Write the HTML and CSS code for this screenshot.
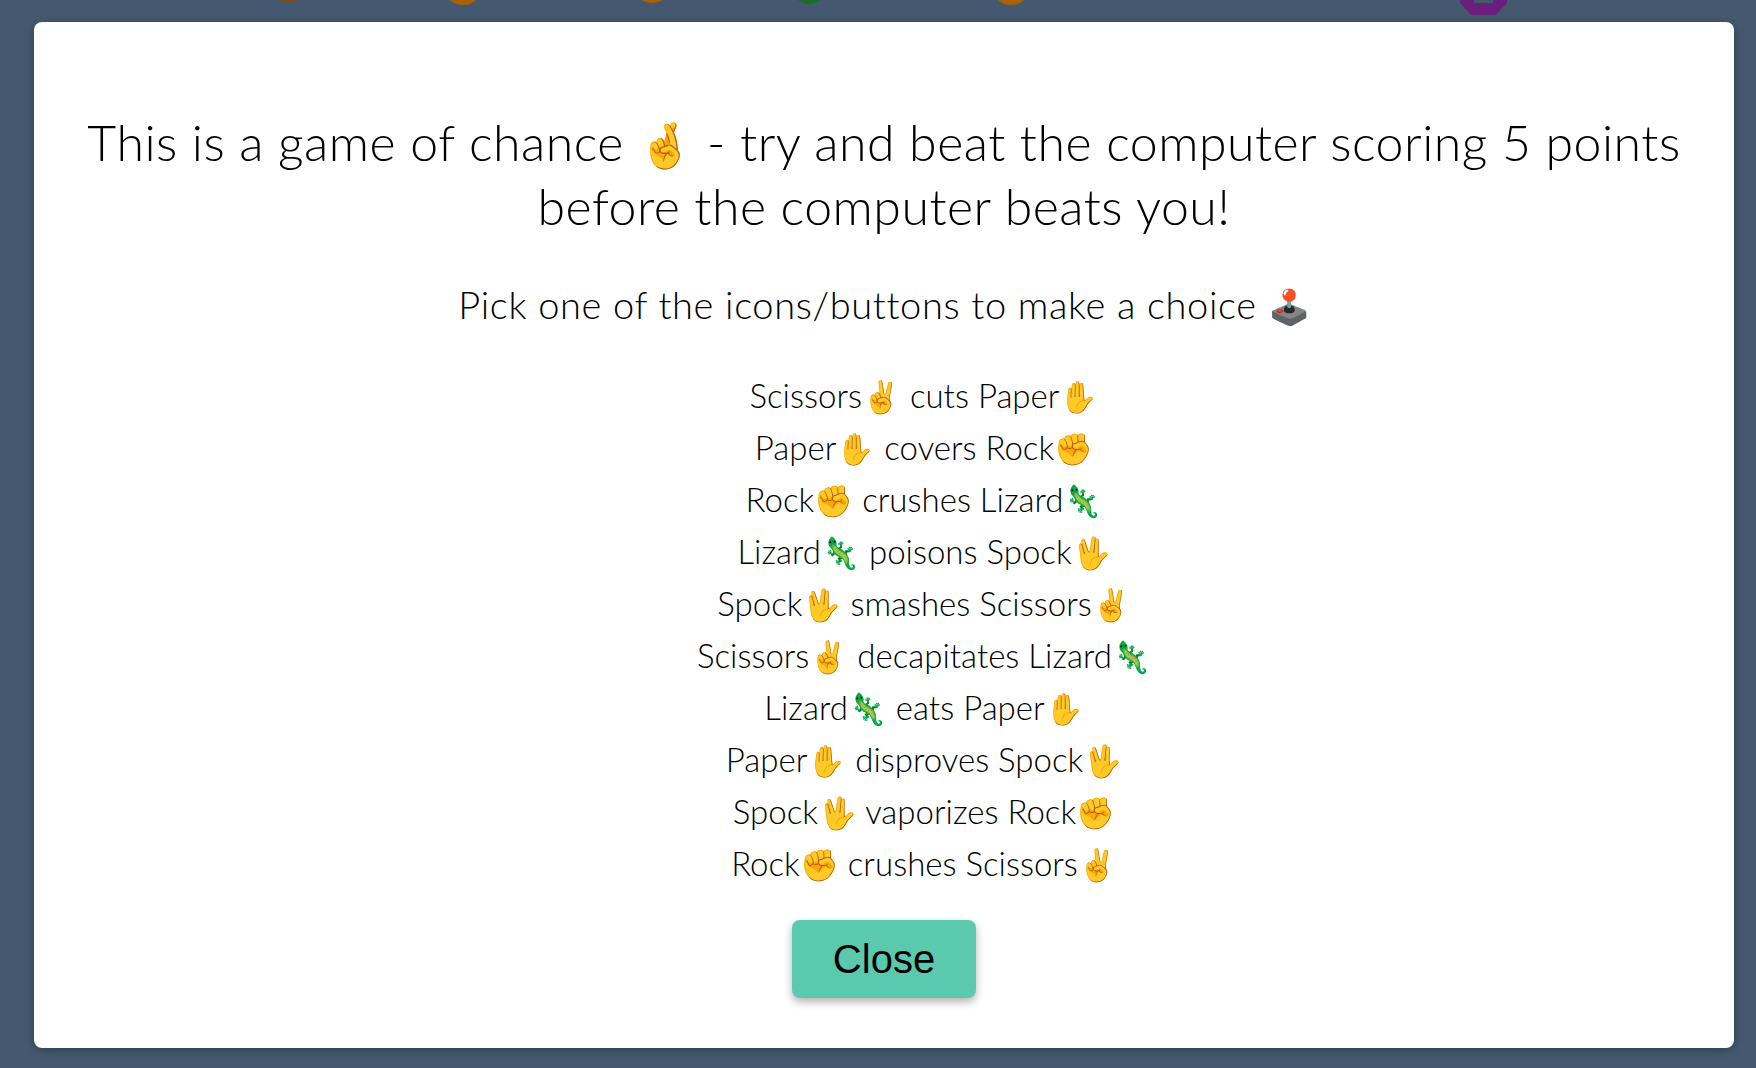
FILE: index.html
```html
<!DOCTYPE html>
<html lang="en">
<head>
    <meta charset="UTF-8">
    <title>Rock Paper Scissors Lizard Spock</title>
    <link rel="stylesheet" href="styles.css">
</head>
<body>
    <!-- bottom edge of the game board, dimmed behind the modal -->
    <svg class="board" width="1756" height="22" viewBox="0 0 1756 22">
        <ellipse cx="288" cy="-10" rx="17" ry="12" fill="#8a4a12"/>
        <ellipse cx="463" cy="-13" rx="19" ry="18" fill="#a86203"/>
        <ellipse cx="652" cy="-12" rx="18" ry="15" fill="#a86203"/>
        <ellipse cx="809" cy="-12" rx="17" ry="16" fill="#1c6b2c"/>
        <ellipse cx="1011" cy="-13" rx="19" ry="18" fill="#a86203"/>
        <path d="M1460 0H1474V3H1493V0H1507V3L1496 15H1471L1460 3Z" fill="#6b1f7d"/>
    </svg>

    <div class="modal">
        <h2>This is a game of chance <span class="em">🤞</span> - try and beat the computer scoring 5 points before the computer beats you!</h2>
        <h3>Pick one of the icons/buttons to make a choice <span class="em">🕹️</span></h3>
        <ul class="rules">
            <li>Scissors<span class="em">✌️</span> cuts Paper<span class="em">✋</span></li>
            <li>Paper<span class="em">✋</span> covers Rock<span class="em">✊</span></li>
            <li>Rock<span class="em">✊</span> crushes Lizard<span class="em">🦎</span></li>
            <li>Lizard<span class="em">🦎</span> poisons Spock<span class="em">🖖</span></li>
            <li>Spock<span class="em">🖖</span> smashes Scissors<span class="em">✌️</span></li>
            <li>Scissors<span class="em">✌️</span> decapitates Lizard<span class="em">🦎</span></li>
            <li>Lizard<span class="em">🦎</span> eats Paper<span class="em">✋</span></li>
            <li>Paper<span class="em">✋</span> disproves Spock<span class="em">🖖</span></li>
            <li>Spock<span class="em">🖖</span> vaporizes Rock<span class="em">✊</span></li>
            <li>Rock<span class="em">✊</span> crushes Scissors<span class="em">✌️</span></li>
        </ul>
        <button class="close">Close</button>
    </div>
</body>
</html>
```

FILE: styles.css
```css
* {
    box-sizing: border-box;
}

body {
    margin: 0;
    height: 1068px;
    overflow: hidden;
    background-color: #44596f;
    font-family: "Lato", sans-serif;
    color: black;
}

.board {
    display: block;
}

.modal {
    width: 1700px;
    margin-left: 34px;
    padding: 88px 40px 50px;
    background-color: white;
    border-radius: 8px;
    box-shadow: 0 2px 8px rgba(0, 0, 0, 0.3);
    text-align: center;
}

h2 {
    margin: 0 0 43px;
    font-size: 50px;
    font-weight: 300;
    line-height: 64px;
    letter-spacing: 0.5px;
}

h3 {
    margin: 0 0 42px;
    font-size: 38px;
    font-weight: 300;
    line-height: 46px;
    letter-spacing: 0.65px;
}

/* the emoji font is taller than the text, keep it out of the line height */
.em {
    line-height: 0;
    letter-spacing: 0;
}

h2 .em {
    font-size: 44px;
}

h3 .em {
    font-size: 34px;
}

.rules {
    margin: 0 0 31px;
    padding: 0 0 0 80px;
    list-style: none;
    font-size: 33px;
    font-weight: 300;
    line-height: 52px;
}

.rules .em {
    font-size: 31px;
}

.close {
    display: block;
    width: 184px;
    height: 78px;
    margin: 0 auto;
    padding: 0;
    border: none;
    border-radius: 8px;
    background-color: #5bc9ae;
    box-shadow: 0 4px 8px rgba(0, 0, 0, 0.3);
    color: black;
    font-family: "Liberation Sans", Arial, sans-serif;
    font-size: 40px;
}
```
